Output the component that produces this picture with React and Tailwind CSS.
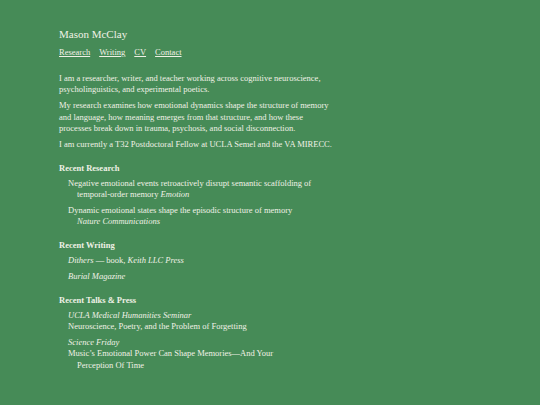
import React from "react";

const research = [
  {
    title: "Negative emotional events retroactively disrupt semantic scaffolding of temporal-order memory",
    venue: "Emotion",
  },
  {
    title: "Dynamic emotional states shape the episodic structure of memory",
    venue: "Nature Communications",
  },
];

const talks = [
  {
    venue: "UCLA Medical Humanities Seminar",
    title: "Neuroscience, Poetry, and the Problem of Forgetting",
  },
  {
    venue: "Science Friday",
    title: "Music\u2019s Emotional Power Can Shape Memories\u2014And Your Perception Of Time",
  },
];

const Heading = ({ children }) => (
  <h2 className="font-bold text-[8.5px] leading-[12px] mt-[11.5px] mb-[4px]">{children}</h2>
);

export default function App() {
  return (
    <div
      className="min-h-[405px] w-full bg-[#468b57] text-[#f0f1e6]"
      style={{ fontFamily: '"Liberation Serif", "Times New Roman", serif' }}
    >
      <div className="pl-[59px] pt-[26px] w-[340px]">
        <h1 className="text-[11px] leading-[16px]">Mason McClay</h1>
        <nav className="flex gap-[9px] text-[8.5px] leading-[12px] mt-[4px]">
          <a href="#" className="underline">Research</a>
          <a href="#" className="underline">Writing</a>
          <a href="#" className="underline">CV</a>
          <a href="#" className="underline">Contact</a>
        </nav>

        <div className="w-[276px] text-[8.5px] leading-[11.3px] mt-[15px] flex flex-col gap-[4.7px]">
          <p>
            I am a researcher, writer, and teacher working across cognitive neuroscience,
            psycholinguistics, and experimental poetics.
          </p>
          <p>
            My research examines how emotional dynamics shape the structure of memory and
            language, how meaning emerges from that structure, and how these processes break
            down in trauma, psychosis, and social disconnection.
          </p>
          <p>I am currently a T32 Postdoctoral Fellow at UCLA Semel and the VA MIRECC.</p>
        </div>

        <div className="text-[8.5px] leading-[11.3px]">
          <Heading>Recent Research</Heading>
          <ul className="ml-[9px] w-[246px] flex flex-col gap-[4.7px]">
            {research.map((r) => (
              <li key={r.title} className="pl-[9px] -indent-[9px]">
                {r.title} <em>{r.venue}</em>
              </li>
            ))}
          </ul>

          <Heading>Recent Writing</Heading>
          <ul className="ml-[9px] w-[246px] flex flex-col gap-[4.7px]">
            <li>
              <em>Dithers</em> — book, <em>Keith LLC Press</em>
            </li>
            <li>
              <em>Burial Magazine</em>
            </li>
          </ul>

          <Heading>Recent Talks &amp; Press</Heading>
          <ul className="ml-[9px] w-[243px] flex flex-col gap-[4.7px]">
            {talks.map((t) => (
              <li key={t.venue}>
                <em className="block">{t.venue}</em>
                <p className="pl-[9px] -indent-[9px]">{t.title}</p>
              </li>
            ))}
          </ul>
        </div>
      </div>
    </div>
  );
}
